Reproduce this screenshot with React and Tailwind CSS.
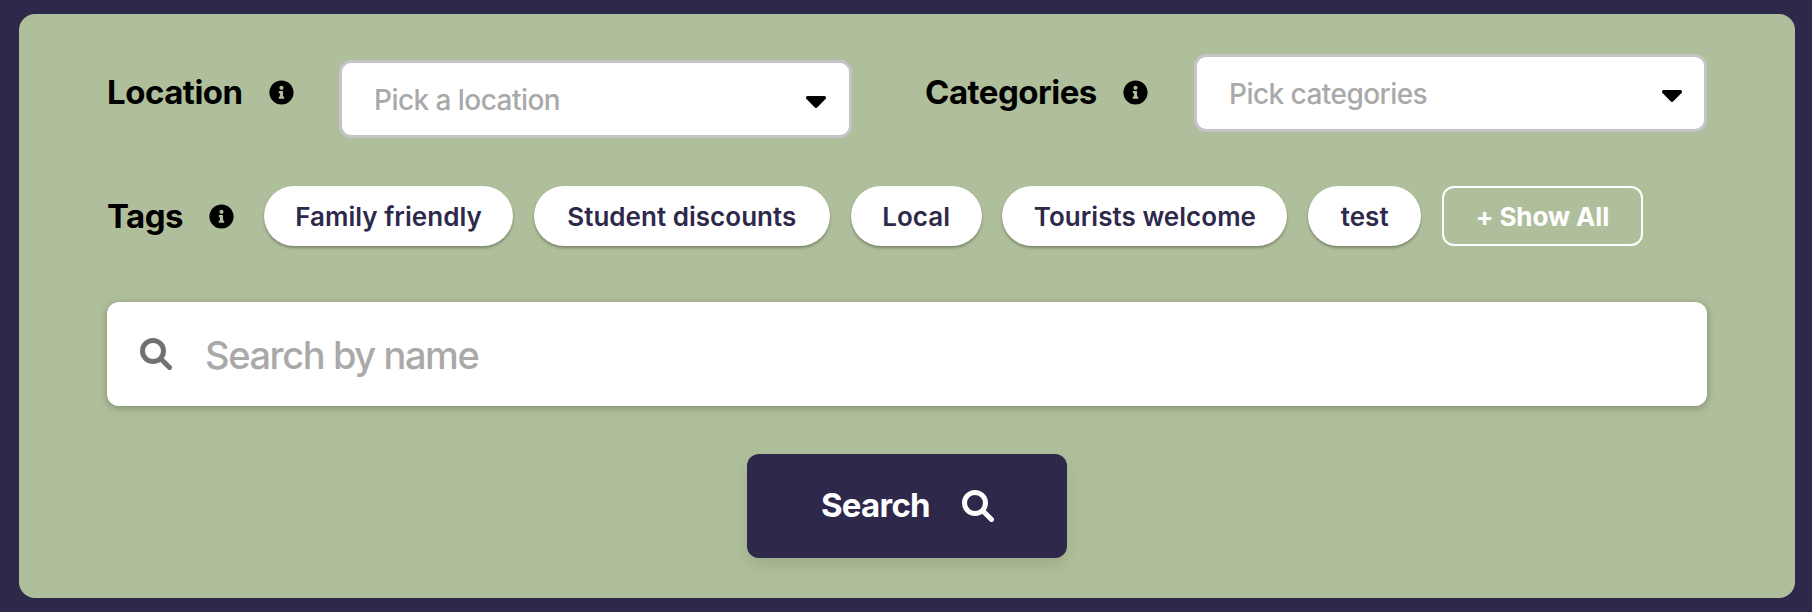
import React from "react";
import { FaInfoCircle } from "react-icons/fa";

const tags = [
  { label: "Family friendly", width: "w-[249px]" },
  { label: "Student discounts", width: "w-[296px]" },
  { label: "Local", width: "w-[131px]" },
  { label: "Tourists welcome", width: "w-[285px]" },
  { label: "test", width: "w-[113px]" },
];

function SearchIcon({ className }) {
  return (
    <svg viewBox="0 0 32 32" fill="none" stroke="currentColor" strokeWidth="5" strokeLinecap="round" className={`size-8 ${className}`}>
      <circle cx="13" cy="13" r="10.5" />
      <path d="M21 21l8.5 8.5" />
    </svg>
  );
}

function Caret() {
  return (
    <svg viewBox="0 0 20 12" fill="currentColor" className="h-3 w-5 text-black">
      <path d="M1.6 0H18.4C19.9 0 20.5 1.8 19.5 2.9L11.4 11.3C10.6 12.2 9.4 12.2 8.6 11.3L.5 2.9C-.5 1.8 .1 0 1.6 0Z" />
    </svg>
  );
}

function Label({ children, className }) {
  return (
    <div className={`flex shrink-0 items-center justify-between ${className}`}>
      <span className="text-[33px] leading-[40px] font-bold tracking-[-0.5px] whitespace-nowrap text-black">{children}</span>
      <FaInfoCircle className="size-[25px] text-black" />
    </div>
  );
}

function Select({ placeholder, className }) {
  return (
    <button className={`flex h-[78px] shrink-0 items-center justify-between rounded-xl border-3 border-[#c6c4c8] bg-white pl-[32px] ${className}`}>
      <span className="pt-[2px] text-[28px] leading-[36px] font-[450] tracking-[-0.55px] text-[#a9a9a9]">{placeholder}</span>
      <span className="pt-[6px]">
        <Caret />
      </span>
    </button>
  );
}

export default function App() {
  return (
    <main className="h-[612px] w-[1812px] bg-[#2e294b] pt-[14px] pl-[19px] font-['Inter',sans-serif]">
      <section className="h-[584px] w-[1776px] rounded-2xl bg-[#b0bf9b] px-[88px] pt-[40px]">
        <div className="flex h-[132px] items-start">
          <Label className="mt-[18px] w-[187px]">Location</Label>
          <Select placeholder="Pick a location" className="mt-[6px] ml-[45px] w-[513px] pr-[23px]" />
          <Label className="mt-[18px] ml-[73px] w-[223px]">Categories</Label>
          <Select placeholder="Pick categories" className="ml-[46px] w-[513px] pr-[22px]" />
        </div>
        <div className="flex h-[60px] items-center">
          <Label className="w-[127px]">Tags</Label>
          <div className="ml-[30px] flex gap-[20.8px]">
            {tags.map((tag) => (
              <button
                key={tag.label}
                className={`flex h-[60px] items-center justify-center rounded-full bg-white pt-px text-[26px] font-semibold tracking-[0.03px] whitespace-nowrap text-[#2e294b] shadow-[0_2px_3px_rgba(0,0,0,0.3)] ${tag.width}`}
              >
                {tag.label}
              </button>
            ))}
            <button className="flex h-[60px] w-[201px] items-center justify-center rounded-xl border-2 border-white pt-px text-[26px] font-bold tracking-[-0.1px] whitespace-nowrap text-white">
              + Show All
            </button>
          </div>
        </div>
        <div className="mt-[56px] flex h-[104px] items-center rounded-xl bg-white pl-[33px] shadow-[0_2px_8px_rgba(0,0,0,0.28)]">
          <SearchIcon className="text-[#717171]" />
          <span className="ml-[33px] pt-[2px] text-[38px] leading-[48px] font-[450] tracking-[-1.4px] text-[#a9a9a9]">Search by name</span>
        </div>
        <button className="mx-auto mt-[48px] flex h-[104px] w-[320px] items-center rounded-xl bg-[#2e294b] pl-[74px] text-white shadow-[0_8px_16px_rgba(0,0,0,0.1)]">
          <span className="w-[141px] pb-[2px] text-left text-[33px] leading-[40px] font-bold tracking-[-0.75px]">Search</span>
          <SearchIcon className="text-white" />
        </button>
      </section>
    </main>
  );
}
